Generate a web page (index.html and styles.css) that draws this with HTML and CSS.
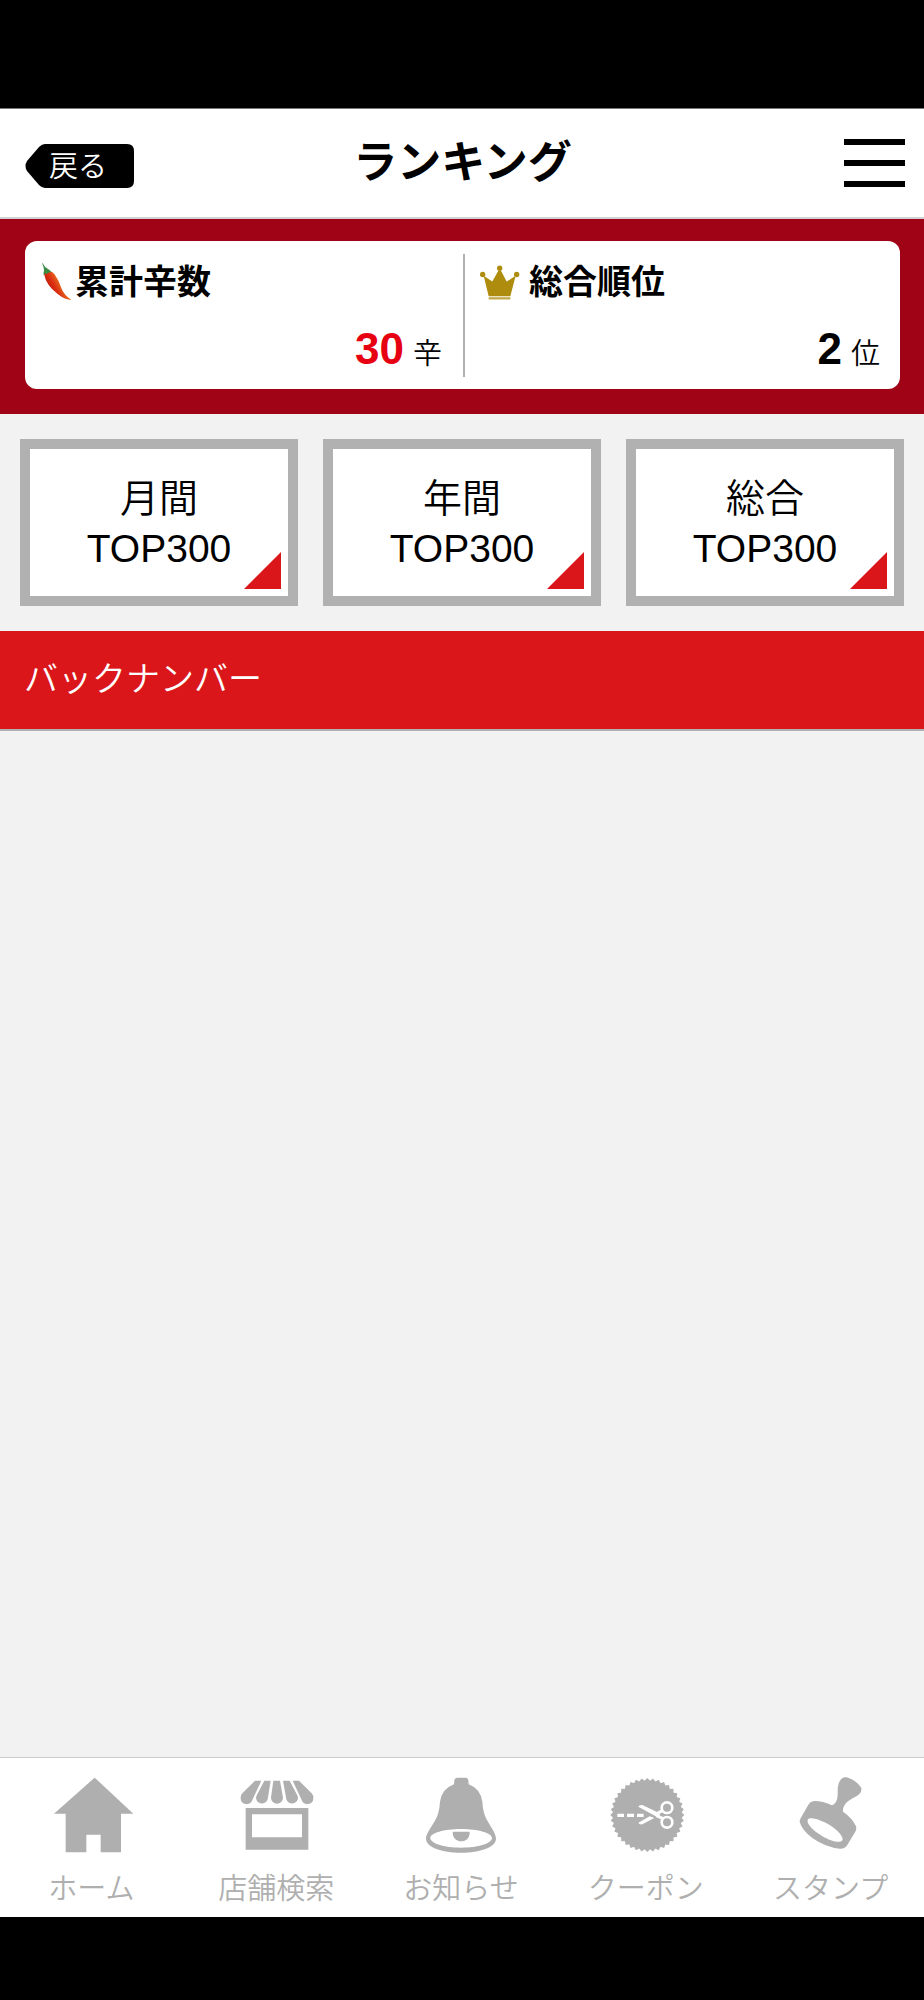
FILE: index.html
```html
<!DOCTYPE html>
<html lang="ja">
<head>
    <meta charset="UTF-8">
    <meta name="viewport" content="width=device-width, initial-scale=1.0">
    <title>ランキング</title>
    <link rel="stylesheet" href="styles.css">
</head>
<body>
    <div class="app">
        <!-- ヘッダー -->
        <header class="header">
            <a class="back">
                <svg class="back-bg" viewBox="0 0 109 44"><path d="M20 0H102Q109 0 109 7V37Q109 44 102 44H20Q17 44 14 41L2 27Q-1 22 2 17L14 3Q17 0 20 0Z"/></svg>
                <span class="back-text">戻る</span>
            </a>
            <h1>ランキング</h1>
            <div class="menu"><span></span><span></span><span></span></div>
        </header>

        <!-- 累計・順位 -->
        <section class="summary">
            <div class="card">
                <div class="score">
                    <div class="score-title">
                        <svg class="chili" viewBox="0 0 90 115">
                            <defs>
                                <linearGradient id="chiliFill" x1="0" y1="1" x2="1" y2="0.4">
                                    <stop offset="0.25" stop-color="#b81408"/>
                                    <stop offset="0.5" stop-color="#dc3012"/>
                                    <stop offset="0.75" stop-color="#e87822"/>
                                </linearGradient>
                            </defs>
                            <path d="M6 34Q7 25 18 25Q30 23 38 35Q50 51 58 76Q66 98 89 112Q70 112 47 94Q12 67 6 34Z" fill="url(#chiliFill)"/>
                            <path d="M0 0Q3 0 5 6Q9 15 18 18Q25 22 28 28L19 29L14 33L10 31L5 38Q3 29 6 23Q5 12 0 0Z" fill="#3b8b45"/>
                        </svg>
                        <span>累計辛数</span>
                    </div>
                    <p class="score-value"><b class="red">30</b><span>辛</span></p>
                </div>
                <div class="score">
                    <div class="score-title">
                        <svg class="crown" viewBox="53 521 120 104">
                            <g fill="#ae8c0e">
                                <circle cx="61" cy="549" r="8"/>
                                <circle cx="112" cy="530" r="8"/>
                                <circle cx="163" cy="549" r="8"/>
                                <path d="M64 553L90 570L109 536H115L133 570L160 553L144 614H79Z"/>
                                <path d="M79 617H144V624H79Z" opacity="0.75"/>
                            </g>
                        </svg>
                        <span>総合順位</span>
                    </div>
                    <p class="score-value"><b>2</b><span>位</span></p>
                </div>
            </div>
        </section>

        <!-- ランキング種別 -->
        <nav class="ranks">
            <a class="rank">月間<br>TOP300</a>
            <a class="rank">年間<br>TOP300</a>
            <a class="rank">総合<br>TOP300</a>
        </nav>

        <h2 class="backnumber">バックナンバー</h2>
        <main class="content"></main>

        <!-- 下部メニュー -->
        <footer class="tabs">
            <a class="tab">
                <svg viewBox="61 102 252 252"><path d="M195 113L311 221H274V337H213V284H170V337H108V221H73Z"/></svg>
                <span>ホーム</span>
            </a>
            <a class="tab">
                <svg viewBox="616 102 252 252">
                    <path d="M676 122H695L668 180A18 18 0 0 1 633 176Q632 166 638 160Z"/>
                    <path d="M704 122H723L714 178A18 18 0 0 1 679 174Q679 169 682 164Z"/>
                    <path d="M731 122H751L760 173A18 18 0 0 1 724 173Z"/>
                    <path d="M760 122H780L802 164Q805 169 805 174A18 18 0 0 1 770 178Z"/>
                    <path d="M789 122H808L846 160Q852 166 851 176A18 18 0 0 1 816 180Z"/>
                    <path fill-rule="evenodd" d="M648 204H836V329H648ZM667 223V292H817V223Z"/>
                </svg>
                <span>店舗検索</span>
            </a>
            <a class="tab">
                <svg viewBox="120 102 252 252">
                    <path fill-rule="evenodd" d="M231 113H258Q264 114 265 121L266 133Q301 146 307 185Q309 222 323 244C335 265 348 282 348 296C348 322 300 338 243 338C186 338 138 322 138 296C138 282 152 265 164 244Q178 222 180 185Q186 146 222 133L223 121Q224 114 231 113ZM151 294C151 310 192 323 243 323C295 323 336 310 336 294C336 279 295 267 243 267C192 267 151 279 151 294Z"/>
                    <path d="M221 275H267Q269 275 269 279C268 295 258 304 244 304C230 304 219 295 218 279Q218 275 221 275Z"/>
                </svg>
                <span>お知らせ</span>
            </a>
            <a class="tab">
                <svg viewBox="34 102 252 252">
                    <defs><rect id="tooth" x="82.5" y="146.5" width="157" height="157"/></defs>
                    <use href="#tooth"/>
                    <use href="#tooth" transform="rotate(9 161 225)"/>
                    <use href="#tooth" transform="rotate(18 161 225)"/>
                    <use href="#tooth" transform="rotate(27 161 225)"/>
                    <use href="#tooth" transform="rotate(36 161 225)"/>
                    <use href="#tooth" transform="rotate(45 161 225)"/>
                    <use href="#tooth" transform="rotate(54 161 225)"/>
                    <use href="#tooth" transform="rotate(63 161 225)"/>
                    <use href="#tooth" transform="rotate(72 161 225)"/>
                    <use href="#tooth" transform="rotate(81 161 225)"/>
                    <g fill="none" stroke="#fff">
                        <path stroke-width="10" d="M71 226H91M100 226H121M130 226H150"/>
                        <circle cx="220" cy="203" r="16" stroke-width="8"/>
                        <circle cx="220" cy="247" r="16" stroke-width="8"/>
                        <path stroke-width="9" d="M188 222L207 211M188 227L207 235"/>
                    </g>
                    <path fill="#fff" d="M134 200Q136 194 146 195L198 220L198 232L186 229ZM134 248L168 229L182 234L146 253Q136 254 134 248Z"/>
                </svg>
                <span>クーポン</span>
            </a>
            <a class="tab">
                <svg viewBox="587 102 252 252">
                    <path fill-rule="evenodd" d="M740 118Q746 110 757 112Q783 119 800 142Q804 152 796 161Q789 168 775 175C757 184 744 199 746 215Q774 234 785 259Q787 267 784 273L759 315Q752 327 736 326Q695 323 655 295Q624 272 616 246Q616 240 619 235L643 193Q648 184 659 183Q687 183 713 196C728 190 731 172 730 151Q730 131 740 118ZM641 238C634 248 654 270 682 287C710 304 738 311 744 301C749 291 729 269 702 253C674 237 646 231 641 238Z"/>
                </svg>
                <span>スタンプ</span>
            </a>
        </footer>
    </div>
</body>
</html>
```
FILE: styles.css
```css
* { margin: 0; padding: 0; box-sizing: border-box; }
body {
    background: #000;
    font-family: "Liberation Sans", "Noto Sans CJK JP", sans-serif;
    font-weight: 350;
    color: #000;
}
.app {
    display: flex;
    flex-direction: column;
    height: 2000px;
    padding: 108px 0 83px;
}

/* ヘッダー */
.header {
    display: grid;
    grid-template-columns: 1fr auto 1fr;
    height: 111px;
    padding: 0 19px 0 25px;
    background: #fff;
    border-top: 1px solid #777;
    border-bottom: 2px solid #d0d4d4;
}
.back {
    position: relative;
    width: 109px;
    height: 44px;
    margin-top: 35px;
}
.back-bg { display: block; width: 109px; height: 44px; }
.back-text {
    position: absolute;
    left: 24px;
    top: 1px;
    line-height: 44px;
    font-size: 29px;
    color: #fff;
}
h1 {
    margin-top: 22px;
    padding-right: 5px;
    font-size: 44px;
    line-height: 64px;
    font-weight: bold;
}
.menu {
    display: flex;
    flex-direction: column;
    gap: 15px;
    justify-self: end;
    width: 61px;
    margin-top: 30px;
}
.menu span { height: 6px; background: #000; }

/* 累計・順位 */
.summary {
    height: 195px;
    padding: 22px 24px 25px 25px;
    background: #a00315;
}
.card {
    display: flex;
    height: 148px;
    padding: 13px 0 12px;
    background: #fff;
    border-radius: 12px;
}
.score { flex: 1; padding: 8px 21px 0 17px; }
.score:first-child { border-right: 2px solid #b1b1b1; padding-right: 21px; }
.score + .score { padding: 8px 20px 0 15px; }
.score-title {
    display: flex;
    align-items: center;
    height: 40px;
    font-size: 34px;
    line-height: 40px;
    font-weight: bold;
}
.chili { width: 30px; height: 38px; margin-right: 3px; }
.crown { width: 40px; height: 35px; margin-right: 9px; }
.score-value {
    display: flex;
    justify-content: flex-end;
    align-items: baseline;
    gap: 9px;
    margin-top: 22px;
    font-size: 29px;
    line-height: 50px;
}
.score-value b { font-size: 44px; font-weight: bold; }
.score-value .red { color: #e60012; }

/* ランキング種別 */
.ranks {
    display: flex;
    gap: 25px;
    height: 217px;
    padding: 25px 20px;
    background: #f2f2f2;
}
.rank {
    position: relative;
    flex: 1;
    padding-top: 25px;
    background: #fff;
    border: 10px solid #b1b1b1;
    font-size: 39px;
    line-height: 50px;
    text-align: center;
}
.rank::after {
    content: "";
    position: absolute;
    right: 7px;
    bottom: 7px;
    border-left: 37px solid transparent;
    border-bottom: 37px solid #da161b;
}
.backnumber {
    height: 100px;
    padding-left: 24px;
    background: #da161b;
    border-bottom: 2px solid #b1b1b1;
    font-size: 34px;
    line-height: 97px;
    font-weight: 350;
    color: #fff;
}
.content { flex: 1; background: #f2f2f2; }

/* 下部メニュー */
.tabs {
    display: flex;
    height: 160px;
    background: #fff;
    border-top: 1px solid #ccc;
}
.tab {
    flex: 1;
    display: flex;
    flex-direction: column;
    align-items: center;
    padding-top: 16px;
    font-size: 29px;
    line-height: 40px;
    color: #afafaf;
}
.tab svg { width: 84px; height: 84px; margin-bottom: 11px; fill: #afafaf; }
.tab span { padding-right: 2px; }
```
